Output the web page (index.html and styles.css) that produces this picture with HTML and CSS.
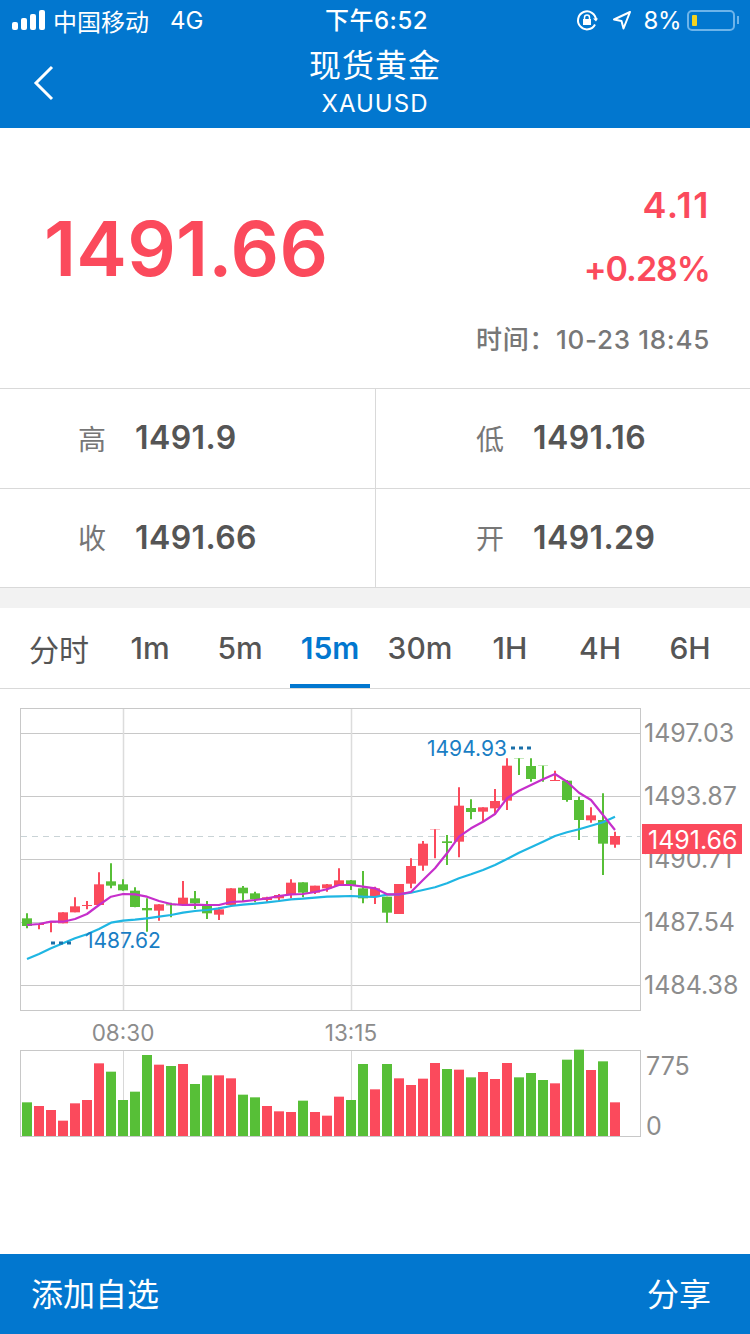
FILE: index.html
```html
<!DOCTYPE html>
<html lang="zh-CN">
<head>
  <meta charset="UTF-8" />
  <meta name="viewport" content="width=device-width, initial-scale=1.0" />
  <title>现货黄金 XAUUSD</title>
  <link rel="stylesheet" href="styles.css">
</head>
<body>
  <div class="top-bar">
    <div class="status-bar">
      <div class="status-left">
        <svg class="signal" width="34" height="20" viewBox="0 0 34 20">
          <rect x="0" y="12" width="6" height="8" rx="2" />
          <rect x="9" y="8" width="6" height="12" rx="2" />
          <rect x="18" y="4" width="6" height="16" rx="2" />
          <rect x="27" y="0" width="6" height="20" rx="2" />
        </svg>
        <span>中国移动</span>
        <span class="network">4G</span>
      </div>
      <div class="status-time">下午6:52</div>
      <div class="status-right">
        <svg class="lock-icon" width="22" height="22" viewBox="0 0 22 22" fill="none" stroke="#fff" stroke-width="2">
          <path d="M19 15.500A9 9 0 1 1 20 11" />
          <path d="M17 9.500l3 3 2-3" fill="#fff" stroke="none" />
          <rect x="7" y="10" width="8" height="6" fill="#fff" stroke="none" />
          <path d="M8.500 10V8.500a2.500 2.500 0 0 1 5 0V10" stroke-width="1.500" />
        </svg>
        <svg width="20" height="20" viewBox="0 0 20 20" fill="none" stroke="#fff" stroke-width="2" stroke-linejoin="round">
          <path d="M18 2L2 9.500l7.500 1.500L11.500 18.500z" />
        </svg>
        <span>8%</span>
        <div class="battery"><div class="battery-level"></div></div>
      </div>
    </div>
    <div class="nav-bar">
      <svg class="back" width="24" height="36" viewBox="0 0 24 36" fill="none" stroke="#fff" stroke-width="3">
        <path d="M20 2L4 18l16 16" />
      </svg>
      <div class="nav-title">现货黄金</div>
      <div class="nav-subtitle">XAUUSD</div>
    </div>
  </div>

  <div class="quote">
    <div class="quote-price">1491.66</div>
    <div class="quote-side">
      <div class="quote-change">4.11</div>
      <div class="quote-change quote-percent">+0.28%</div>
      <div class="quote-time">时间：10-23 18:45</div>
    </div>
  </div>

  <div class="stats">
    <div class="stat"><span class="stat-label">高</span><span class="stat-value">1491.9</span></div>
    <div class="stat"><span class="stat-label">低</span><span class="stat-value">1491.16</span></div>
    <div class="stat"><span class="stat-label">收</span><span class="stat-value">1491.66</span></div>
    <div class="stat"><span class="stat-label">开</span><span class="stat-value">1491.29</span></div>
  </div>

  <div class="tabs">
    <div class="tab tab-cjk">分时</div>
    <div class="tab">1m</div>
    <div class="tab">5m</div>
    <div class="tab active">15m</div>
    <div class="tab">30m</div>
    <div class="tab">1H</div>
    <div class="tab">4H</div>
    <div class="tab">6H</div>
  </div>

  <div class="chart">
    <svg id="chart" width="750" height="565" viewBox="0 689 750 565"></svg>
  </div>

  <div class="bottom-bar">
    <span>添加自选</span>
    <span>分享</span>
  </div>

  <script src="chart.js"></script>
</body>
</html>
```

FILE: styles.css
```css
:root {
  --blue: #0277cf;
  --red: #fb4a5c;
  --green: #57bf37;
  --border-color: #d9d9d9;
  --text-color: #555;
  --muted: #777;
}

* {
  box-sizing: border-box;
}

body {
  margin: 0;
  width: 750px;
  height: 1334px;
  overflow: hidden;
  display: flex;
  flex-direction: column;
  background-color: #fff;
  color: var(--text-color);
  font-family: Inter, "Noto Sans CJK SC", sans-serif;
}

.top-bar {
  height: 128px;
  flex: none;
  background-color: var(--blue);
  color: #fff;
}

.status-bar {
  height: 40px;
  padding: 0 12px;
  display: grid;
  grid-template-columns: 1fr auto 1fr;
  align-items: center;
  font-size: 24px;
}

.status-left,
.status-right {
  display: flex;
  align-items: center;
}

.status-left {
  gap: 7px;
}

.signal {
  fill: #fff;
}

.network {
  margin-left: 14px;
}

.status-time {
  margin: -3px 0 0 3px;
  font-weight: 500;
  letter-spacing: 0.5px;
}

.status-right {
  justify-content: flex-end;
  gap: 12px;
}

.status-right span {
  margin-right: -6px;
  letter-spacing: -0.5px;
}

.lock-icon {
  margin-right: 2px;
}

.battery {
  width: 48px;
  height: 21px;
  margin-right: 3px;
  padding: 3px;
  border: 2px solid #6db4ea;
  border-radius: 5px;
  position: relative;
}

.battery::after {
  content: "";
  position: absolute;
  right: -6px;
  top: 4px;
  width: 2px;
  height: 8px;
  background-color: #6db4ea;
}

.battery-level {
  width: 5px;
  height: 100%;
  border-radius: 1px;
  background-color: #f4d21f;
}

.nav-bar {
  height: 88px;
  padding-top: 3px;
  position: relative;
  text-align: center;
}

.back {
  position: absolute;
  left: 32px;
  top: 25px;
}

.nav-title {
  font-size: 32px;
  line-height: 46px;
  letter-spacing: 1px;
}

.nav-subtitle {
  font-size: 24px;
  line-height: 30px;
  letter-spacing: 1px;
}

.quote {
  height: 261px;
  flex: none;
  padding: 0 40px 0 44px;
  display: flex;
  justify-content: space-between;
  border-bottom: 1px solid var(--border-color);
}

.quote-price {
  margin-top: 75px;
  font-size: 76px;
  line-height: 90px;
  font-weight: 600;
  color: var(--red);
  letter-spacing: 0.2px;
}

.quote-side {
  padding-top: 45px;
  text-align: right;
}

.quote-change {
  font-size: 36px;
  line-height: 64px;
  font-weight: 600;
  color: var(--red);
  letter-spacing: 1.5px;
}

.quote-percent {
  font-size: 34px;
  letter-spacing: -1px;
}

.quote-time {
  margin-top: 19px;
  font-size: 26px;
  line-height: 40px;
  font-weight: 500;
  color: var(--muted);
  letter-spacing: 0.7px;
}

.stats {
  flex: none;
  height: 199px;
  display: grid;
  grid-template-columns: 1fr 1fr;
  grid-template-rows: 100px 98px;
  border-bottom: 1px solid var(--border-color);
}

.stat {
  padding: 0 0 2px 78px;
  display: flex;
  align-items: center;
  gap: 29px;
  border-bottom: 1px solid var(--border-color);
}

.stat:nth-child(2n) {
  padding-left: 100px;
  border-left: 1px solid var(--border-color);
}

.stat:nth-child(n+3) {
  border-bottom: none;
}

.stat-label {
  font-size: 28px;
  color: var(--muted);
}

.stat-value {
  font-size: 32px;
  font-weight: 600;
  letter-spacing: 0.4px;
}

.tabs {
  flex: none;
  height: 101px;
  border-top: 20px solid #f2f2f2;
  border-bottom: 1px solid var(--border-color);
  display: grid;
  grid-template-columns: repeat(8, 90px);
  padding-left: 15px;
}

.tab {
  display: flex;
  align-items: center;
  justify-content: center;
  font-size: 30px;
  font-weight: 500;
}

.tab-cjk {
  font-weight: 400;
  padding-right: 2px;
}

.tab.active {
  margin: 0 5px;
  padding-top: 4px;
  color: var(--blue);
  font-weight: 600;
  border-bottom: 4px solid var(--blue);
}

.chart {
  flex: 1;
  min-height: 0;
}

.chart svg {
  display: block;
}

.axis-label {
  font-size: 25px;
  fill: #8c8c8c;
}

.time-label {
  font-size: 22.500px;
  fill: #8c8c8c;
  text-anchor: middle;
}

.extreme-label {
  font-size: 21px;
  fill: #1a7ec4;
}

.last-label {
  font-size: 25px;
  fill: #fff;
}

.bottom-bar {
  flex: none;
  height: 80px;
  padding: 0 39px 5px 31px;
  display: flex;
  align-items: center;
  justify-content: space-between;
  background-color: var(--blue);
  color: #fff;
  font-size: 32px;
}
```

FILE: chart.js
```js
const RED = "#fb4a5c";
const GREEN = "#57bf37";
const GRID = "#c8c8c8";
const NS = "http://www.w3.org/2000/svg";
const chart = document.getElementById("chart");

// r/g, high, body top, body bottom, low (measured in 3x units from y=700)
const candles = [
  ["g", 640, 655, 678, 685], ["r", 672, 672, 675, 688], ["r", 665, 665, 668, 697], ["r", 637, 637, 670, 670],
  ["r", 592, 619, 637, 637], ["r", 603, 615, 618, 628], ["r", 517, 553, 615, 615], ["g", 490, 544, 557, 565],
  ["g", 538, 553, 571, 572], ["g", 562, 572, 621, 622], ["g", 595, 624, 631, 695], ["r", 613, 613, 632, 662],
  ["g", 608, 613, 616, 652], ["r", 543, 593, 612, 612], ["g", 573, 595, 610, 627], ["g", 603, 617, 640, 657],
  ["r", 622, 628, 644, 660], ["r", 565, 565, 615, 620], ["g", 558, 563, 580, 605], ["g", 575, 580, 598, 607],
  ["r", 590, 592, 600, 607], ["r", 582, 585, 595, 605], ["r", 538, 548, 585, 595], ["g", 547, 547, 578, 592],
  ["r", 557, 557, 578, 582], ["r", 552, 553, 565, 575], ["r", 505, 541, 558, 558], ["g", 540, 541, 556, 570],
  ["g", 513, 565, 595, 610], ["r", 560, 565, 590, 612], ["g", 590, 590, 638, 668], ["r", 552, 552, 642, 642],
  ["r", 475, 498, 551, 565], ["r", 423, 431, 497, 512], ["r", 388, 388, 389, 475], ["g", 405, 424, 429, 495],
  ["r", 262, 317, 425, 472], ["g", 298, 324, 336, 358], ["r", 322, 322, 335, 365], ["r", 267, 303, 325, 340],
  ["r", 175, 197, 302, 330], ["g", 175, 175, 176, 225], ["g", 175, 198, 237, 245], ["g", 197, 197, 198, 245],
  ["r", 212, 240, 243, 243], ["g", 240, 242, 300, 305], ["g", 290, 300, 360, 420], ["r", 322, 346, 361, 368],
  ["g", 280, 360, 431, 525], ["r", 395, 408, 434, 443]
];

const magenta = [
  675, 672, 665, 665, 657, 642, 615, 590, 582, 583, 590, 603, 612, 615, 614, 615, 615, 606, 604, 600,
  595, 588, 583, 582, 576, 568, 555, 555, 560, 565, 583, 583, 576, 540, 505, 460, 410, 385, 365, 342,
  295, 272, 255, 238, 222, 245, 278, 300, 345, 390
];

const cyan = [
  777, 762, 745, 730, 715, 703, 687, 668, 662, 659, 655, 650, 645, 638, 633, 630, 625, 618, 614, 611,
  607, 603, 598, 596, 593, 590, 589, 588, 590, 591, 584, 583, 578, 570, 562, 550, 535, 523, 510, 495,
  477, 458, 442, 425, 408, 397, 388, 377, 367, 350
];

// bar tops, 3x units from y=1020
const volumes = [
  247, 258, 270, 302, 250, 240, 130, 155, 240, 215, 105, 134, 138, 132, 192, 166, 166, 175, 224, 232,
  258, 274, 276, 242, 276, 287, 230, 240, 132, 208, 132, 175, 195, 176, 129, 147, 149, 172, 156, 177,
  129, 172, 159, 180, 190, 119, 89, 150, 124, 247
];

const candleY = (v) => 700 + v / 3;
const candleX = (i) => 27 + i * 12;

function add(tag, attrs, text) {
  const el = document.createElementNS(NS, tag);
  Object.keys(attrs).forEach((key) => el.setAttribute(key, attrs[key]));
  if (text) el.textContent = text;
  chart.appendChild(el);
  return el;
}

function line(x1, y1, x2, y2, stroke, extra = {}) {
  add("line", { x1, y1, x2, y2, stroke, "stroke-width": 1, ...extra });
}

function frame(top, bottom) {
  add("rect", { x: 20.5, y: top + 0.5, width: 620, height: bottom - top, fill: "none", stroke: GRID });
}

function maLine(values, stroke) {
  const points = values.map((v, i) => `${candleX(i)},${candleY(v).toFixed(1)}`).join(" ");
  add("polyline", { points, stroke, fill: "none", "stroke-width": 2.2, "stroke-linejoin": "round" });
}

// price panel
[733, 796, 859, 922, 985].forEach((y) => line(21, y + 0.5, 640, y + 0.5, GRID));
[123, 351].forEach((x) => line(x + 0.5, 709, x + 0.5, 1010, "#dcdcdc", { "stroke-width": 1.5 }));
line(21, 836.5, 640, 836.5, "#c9d3d6", { "stroke-dasharray": "6 5" });
frame(708, 1010);

candles.forEach(([dir, high, top, bottom, low], i) => {
  const color = dir === "r" ? RED : GREEN;
  const x = candleX(i);
  line(x, candleY(high), x, candleY(low), color, { "stroke-width": 2 });
  add("rect", { x: x - 5, y: candleY(top), width: 10, height: (bottom - top) / 3, fill: color });
});

maLine(cyan, "#1fb6e3");
maLine(magenta, "#c62fcb");

// high and low markers
add("text", { x: 427, y: 756, class: "extreme-label" }, "1494.93");
add("text", { x: 85, y: 948, class: "extreme-label" }, "1487.62");
line(511, 748, 532, 748, "#1a6fa8", { "stroke-width": 3, "stroke-dasharray": "4 4" });
line(51, 943, 72, 943, "#1a6fa8", { "stroke-width": 3, "stroke-dasharray": "4 4" });

// price axis
[["1497.03", 742], ["1493.87", 805], ["1490.71", 868], ["1487.54", 931], ["1484.38", 994]].forEach(([label, y]) => {
  add("text", { x: 644, y, class: "axis-label" }, label);
});
add("rect", { x: 642, y: 824, width: 100, height: 30, fill: RED });
add("text", { x: 648, y: 849, class: "last-label" }, "1491.66");

// time axis
add("text", { x: 123, y: 1041, class: "time-label" }, "08:30");
add("text", { x: 351, y: 1041, class: "time-label" }, "13:15");

// volume panel
[123, 351].forEach((x) => line(x + 0.5, 1051, x + 0.5, 1136, "#d8d8d8"));
frame(1050, 1136);
volumes.forEach((v, i) => {
  const y = 1020 + v / 3;
  add("rect", { x: candleX(i) - 5, y, width: 10, height: 1136 - y, fill: candles[i][0] === "r" ? RED : GREEN });
});
add("text", { x: 646, y: 1075, class: "axis-label" }, "775");
add("text", { x: 646, y: 1135, class: "axis-label" }, "0");
```
